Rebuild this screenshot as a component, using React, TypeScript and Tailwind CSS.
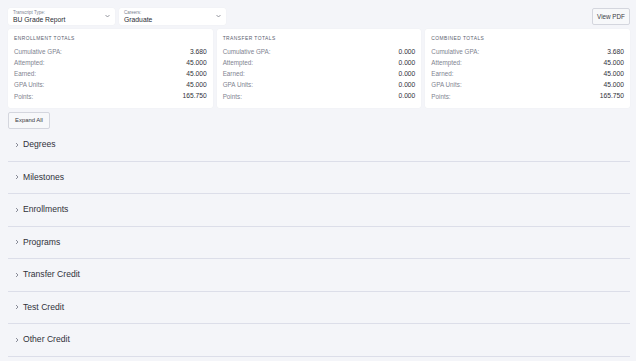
import React from "react";

const font = { fontFamily: '"Liberation Sans", Arial, sans-serif' };

function Select({ label, value }: { label: string; value: string }) {
  return (
    <div className="relative w-[107px] h-[17px] bg-white rounded-[2px] shadow-[0_0_1px_rgba(0,0,0,0.08)] pl-[5px] pt-[2px]">
      <div className="text-[4.5px] leading-[5px] text-[#7b7f8f]">{label}</div>
      <div className="text-[6.8px] leading-[8px] text-[#2c2d35] mt-[0.5px]">{value}</div>
      <svg className="absolute right-[5px] top-[6px]" width="5" height="4" viewBox="0 0 5 4">
        <path d="M0.5 1 L2.5 3 L4.5 1" fill="none" stroke="#6a6d7a" strokeWidth="0.7" />
      </svg>
    </div>
  );
}

function Card({ title, rows }: { title: string; rows: [string, string][] }) {
  return (
    <div className="bg-white rounded-[2px] h-[79px] px-[6px] pt-[6px] shadow-[0_0_1px_rgba(0,0,0,0.08)]">
      <div className="text-[4.9px] leading-[8px] tracking-[0.45px] text-[#5a5e6e] uppercase">{title}</div>
      <div className="mt-[3px] flex flex-col">
        {rows.map(([k, v]) => (
          <div key={k} className="flex justify-between h-[11.2px] items-center">
            <span className="text-[6.3px] text-[#80838f]">{k}</span>
            <span className="text-[6.7px] text-[#2f3038]">{v}</span>
          </div>
        ))}
      </div>
    </div>
  );
}

const items = ["Degrees", "Milestones", "Enrollments", "Programs", "Transfer Credit", "Test Credit", "Other Credit"];

export default function App() {
  const enr: [string, string][] = [
    ["Cumulative GPA:", "3.680"],
    ["Attempted:", "45.000"],
    ["Earned:", "45.000"],
    ["GPA Units:", "45.000"],
    ["Points:", "165.750"],
  ];
  const tr: [string, string][] = [
    ["Cumulative GPA:", "0.000"],
    ["Attempted:", "0.000"],
    ["Earned:", "0.000"],
    ["GPA Units:", "0.000"],
    ["Points:", "0.000"],
  ];
  return (
    <div style={font} className="bg-[#f4f5f9] min-h-[361px] w-[636px] pl-2 pr-[6px] pt-2">
      <div className="flex items-start gap-[4px]">
        <Select label="Transcript Type:" value="BU Grade Report" />
        <Select label="Careers:" value="Graduate" />
        <button className="ml-auto w-[38px] h-[17px] bg-[#f7f8fa] border border-[#d4d6de] rounded-[2px] text-[6.3px] text-[#3a3b44] flex items-center justify-center">
          View PDF
        </button>
      </div>
      <div className="mt-[4px] grid grid-cols-3 gap-[4px]">
        <Card title="Enrollment Totals" rows={enr} />
        <Card title="Transfer Totals" rows={tr} />
        <Card title="Combined Totals" rows={enr} />
      </div>
      <button className="mt-[4px] w-[42px] h-[17px] bg-[#f7f8fa] border border-[#d4d6de] rounded-[2px] text-[5.9px] text-[#3a3b44] flex items-center justify-center">
        Expand All
      </button>
      <div className="flex flex-col">
        {items.map((it) => (
          <div key={it} className="h-[32.5px] border-b border-[#dcdee9] flex items-center pl-[7px]">
            <svg width="4" height="6" viewBox="0 0 4 6" className="mr-[4px]">
              <path d="M1 1 L3 3 L1 5" fill="none" stroke="#6f7280" strokeWidth="0.8" />
            </svg>
            <span className="text-[8.6px] text-[#30313a]">{it}</span>
          </div>
        ))}
      </div>
    </div>
  );
}
